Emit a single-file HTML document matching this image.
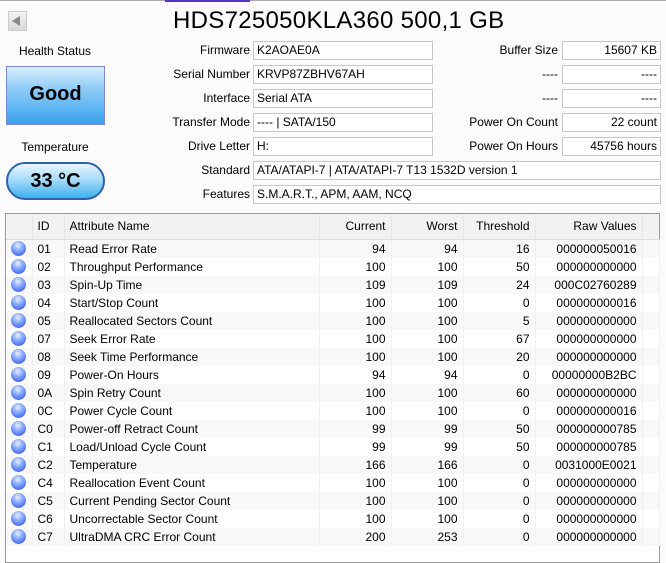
<!DOCTYPE html>
<html><head><meta charset="utf-8"><style>
*{margin:0;padding:0;box-sizing:border-box}
body{width:666px;height:558px;background:#fbfbfb;font-family:"Liberation Sans",sans-serif;font-size:12px;color:#000;position:relative;overflow:hidden}
.a{position:absolute;white-space:nowrap}
.lbl{position:absolute;text-align:right;white-space:nowrap;line-height:19px}
.box{position:absolute;height:19px;border:1px solid #c8c8c8;background:#fff;line-height:17px;padding:0 3px;white-space:nowrap}
.r{text-align:right}
table{border-collapse:collapse;position:absolute;left:6px;top:214px;table-layout:fixed}
td,th{height:18px;font-weight:normal;white-space:nowrap;padding:0 5px;line-height:18px}
th{height:25px;background:#f2f2f2;border-right:1px solid #e6e6e6;border-bottom:1px solid #ddd}
td{border-right:1px solid #f0f0f0}
tr:nth-child(even) td{background:#f8f8f8}
.dot{display:inline-block;width:15px;height:15px;border-radius:50%;background:radial-gradient(circle at 45% 30%,#e8efff 0,#8fb0ff 35%,#4a6ef0 75%,#3550cc 100%);vertical-align:middle;margin-top:-2px}
</style></head><body>
<div class="a" style="left:0;top:0;width:666px;height:1px;background:#aaa"></div>
<div class="a" style="left:165px;top:0;width:85px;height:2px;background:#5533cc"></div>
<div class="a" style="left:8px;top:11px;width:19px;height:20px;background:linear-gradient(#f4f4f4,#d8d8d8);border:1px solid #ccc"></div>
<div class="a" style="left:12px;top:16px;width:0;height:0;border-top:5px solid transparent;border-bottom:5px solid transparent;border-right:8px solid #888"></div>
<div class="a" style="left:173px;top:7px;font-size:24px;letter-spacing:0.3px">HDS725050KLA360 500,1 GB</div>

<div class="a" style="left:0;width:110px;text-align:center;top:44px">Health Status</div>
<div class="a" style="left:6px;top:66px;width:99px;height:59px;border:1px solid #7a8cd0;background:linear-gradient(#d8eefc 0,#8ccbf6 40%,#38a2ee 100%);text-align:center;line-height:55px;font-weight:bold;font-size:20px">Good</div>
<div class="a" style="left:0;width:110px;text-align:center;top:140px">Temperature</div>
<div class="a" style="left:6px;top:162px;width:99px;height:38px;border:2px solid #3060b0;border-radius:19px;background:linear-gradient(#e8f6ff 0,#a8dcfa 45%,#40b0f0 100%);text-align:center;line-height:34px;font-weight:bold;font-size:20px">33 °C</div>

<div class="lbl" style="right:416px;top:41px">Firmware</div>
<div class="lbl" style="right:416px;top:65px">Serial Number</div>
<div class="lbl" style="right:416px;top:89px">Interface</div>
<div class="lbl" style="right:416px;top:113px">Transfer Mode</div>
<div class="lbl" style="right:416px;top:137px">Drive Letter</div>
<div class="lbl" style="right:416px;top:161px">Standard</div>
<div class="lbl" style="right:416px;top:185px">Features</div>
<div class="box" style="left:253px;top:41px;width:180px">K2AOAE0A</div>
<div class="box" style="left:253px;top:65px;width:180px">KRVP87ZBHV67AH</div>
<div class="box" style="left:253px;top:89px;width:180px">Serial ATA</div>
<div class="box" style="left:253px;top:113px;width:180px">---- | SATA/150</div>
<div class="box" style="left:253px;top:137px;width:180px">H:</div>
<div class="box" style="left:253px;top:161px;width:408px">ATA/ATAPI-7 | ATA/ATAPI-7 T13 1532D version 1</div>
<div class="box" style="left:253px;top:185px;width:408px">S.M.A.R.T., APM, AAM, NCQ</div>

<div class="lbl" style="right:108px;top:41px">Buffer Size</div>
<div class="lbl" style="right:108px;top:65px">----</div>
<div class="lbl" style="right:108px;top:89px">----</div>
<div class="lbl" style="right:108px;top:113px">Power On Count</div>
<div class="lbl" style="right:108px;top:137px">Power On Hours</div>
<div class="box r" style="left:562px;top:41px;width:99px">15607 KB</div>
<div class="box r" style="left:562px;top:65px;width:99px">----</div>
<div class="box r" style="left:562px;top:89px;width:99px">----</div>
<div class="box r" style="left:562px;top:113px;width:99px">22 count</div>
<div class="box r" style="left:562px;top:137px;width:99px">45756 hours</div>

<div class="a" style="left:5px;top:213px;width:655px;height:350px;border:1px solid #999;background:#fff"></div>
<table>
<colgroup><col style="width:26px"><col style="width:32px"><col style="width:255px"><col style="width:72px"><col style="width:72px"><col style="width:72px"><col style="width:107px"><col style="width:17px"></colgroup>
<tr><th></th><th style="text-align:left">ID</th><th style="text-align:left">Attribute Name</th><th class="r">Current</th><th class="r">Worst</th><th class="r">Threshold</th><th class="r">Raw Values</th><th style="border-right:none"></th></tr>
<tr><td><span class="dot"></span></td><td>01</td><td>Read Error Rate</td><td class="r">94</td><td class="r">94</td><td class="r">16</td><td class="r">000000050016</td><td></td></tr>
<tr><td><span class="dot"></span></td><td>02</td><td>Throughput Performance</td><td class="r">100</td><td class="r">100</td><td class="r">50</td><td class="r">000000000000</td><td></td></tr>
<tr><td><span class="dot"></span></td><td>03</td><td>Spin-Up Time</td><td class="r">109</td><td class="r">109</td><td class="r">24</td><td class="r">000C02760289</td><td></td></tr>
<tr><td><span class="dot"></span></td><td>04</td><td>Start/Stop Count</td><td class="r">100</td><td class="r">100</td><td class="r">0</td><td class="r">000000000016</td><td></td></tr>
<tr><td><span class="dot"></span></td><td>05</td><td>Reallocated Sectors Count</td><td class="r">100</td><td class="r">100</td><td class="r">5</td><td class="r">000000000000</td><td></td></tr>
<tr><td><span class="dot"></span></td><td>07</td><td>Seek Error Rate</td><td class="r">100</td><td class="r">100</td><td class="r">67</td><td class="r">000000000000</td><td></td></tr>
<tr><td><span class="dot"></span></td><td>08</td><td>Seek Time Performance</td><td class="r">100</td><td class="r">100</td><td class="r">20</td><td class="r">000000000000</td><td></td></tr>
<tr><td><span class="dot"></span></td><td>09</td><td>Power-On Hours</td><td class="r">94</td><td class="r">94</td><td class="r">0</td><td class="r">00000000B2BC</td><td></td></tr>
<tr><td><span class="dot"></span></td><td>0A</td><td>Spin Retry Count</td><td class="r">100</td><td class="r">100</td><td class="r">60</td><td class="r">000000000000</td><td></td></tr>
<tr><td><span class="dot"></span></td><td>0C</td><td>Power Cycle Count</td><td class="r">100</td><td class="r">100</td><td class="r">0</td><td class="r">000000000016</td><td></td></tr>
<tr><td><span class="dot"></span></td><td>C0</td><td>Power-off Retract Count</td><td class="r">99</td><td class="r">99</td><td class="r">50</td><td class="r">000000000785</td><td></td></tr>
<tr><td><span class="dot"></span></td><td>C1</td><td>Load/Unload Cycle Count</td><td class="r">99</td><td class="r">99</td><td class="r">50</td><td class="r">000000000785</td><td></td></tr>
<tr><td><span class="dot"></span></td><td>C2</td><td>Temperature</td><td class="r">166</td><td class="r">166</td><td class="r">0</td><td class="r">0031000E0021</td><td></td></tr>
<tr><td><span class="dot"></span></td><td>C4</td><td>Reallocation Event Count</td><td class="r">100</td><td class="r">100</td><td class="r">0</td><td class="r">000000000000</td><td></td></tr>
<tr><td><span class="dot"></span></td><td>C5</td><td>Current Pending Sector Count</td><td class="r">100</td><td class="r">100</td><td class="r">0</td><td class="r">000000000000</td><td></td></tr>
<tr><td><span class="dot"></span></td><td>C6</td><td>Uncorrectable Sector Count</td><td class="r">100</td><td class="r">100</td><td class="r">0</td><td class="r">000000000000</td><td></td></tr>
<tr><td><span class="dot"></span></td><td>C7</td><td>UltraDMA CRC Error Count</td><td class="r">200</td><td class="r">253</td><td class="r">0</td><td class="r">000000000000</td><td></td></tr>
</table>
</body></html>
